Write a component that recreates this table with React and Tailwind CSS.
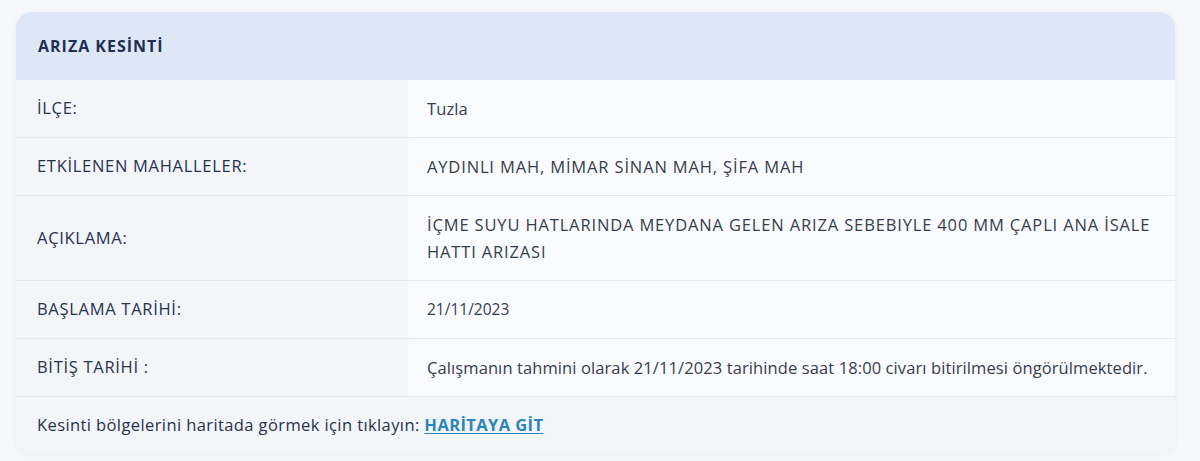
import React from 'react';

const rows = [
  { label: 'İLÇE:', value: 'Tuzla', caps: false },
  { label: 'ETKİLENEN MAHALLELER:', value: 'AYDINLI MAH, MİMAR SİNAN MAH, ŞİFA MAH', caps: true },
  { label: 'AÇIKLAMA:', value: 'İÇME SUYU HATLARINDA MEYDANA GELEN ARIZA SEBEBIYLE 400 MM ÇAPLI ANA İSALE HATTI ARIZASI', caps: true },
  { label: 'BAŞLAMA TARİHİ:', value: '21/11/2023', date: true },
  { label: 'BİTİŞ TARİHİ :', value: 'Çalışmanın tahmini olarak 21/11/2023 tarihinde saat 18:00 civarı bitirilmesi öngörülmektedir.', caps: false },
];

export default function App() {
  return (
    <div className="min-h-screen bg-[#f6f8fc] px-4 pt-3 pb-[6px] font-['Open_Sans',sans-serif]" style={{ width: 1200, height: 461 }}>
      <div className="w-[1159px] rounded-2xl overflow-hidden bg-[#f2f5fa] shadow-[0_1px_6px_rgba(30,45,80,0.06)]">
        {/* Header */}
        <div className="h-[68px] flex items-center px-[22px] bg-[#dee7f6]">
          <h2 className="text-[16px] font-bold tracking-[1px] text-[#1f2f52]">ARIZA KESİNTİ</h2>
        </div>

        {/* Rows */}
        {rows.map((r, i) => (
          <div key={i} className="flex border-b border-[#e3e8f0]">
            <div className="w-[392px] shrink-0 px-[21px] flex items-center bg-[#f2f5fa] text-[16.5px] tracking-[0.7px] text-[#28324a]">
              {r.label}
            </div>
            <div
              className={
                r.caps
                  ? 'flex-1 py-[15px] pl-[19px] pr-6 bg-[#fafbfe] text-[16.5px] leading-[27px] tracking-[0.85px] text-[#363d4c]'
                  : r.date
                  ? 'flex-1 py-[15px] pl-[19px] pr-6 bg-[#fafbfe] text-[15.5px] leading-[27px] text-[#363d4c]'
                  : 'flex-1 py-[15px] pl-[19px] pr-6 bg-[#fafbfe] text-[16.5px] leading-[27px] tracking-[0.1px] text-[#363d4c]'
              }
            >
              {r.value}
            </div>
          </div>
        ))}

        {/* Footer */}
        <div className="h-[57px] flex items-center px-[21px] bg-[#f2f5fa] text-[16.5px] tracking-[0.4px] text-[#28324a]">
          Kesinti bölgelerini haritada görmek için tıklayın:&nbsp;
          <a href="#" className="font-bold text-[#2b86b8] underline underline-offset-2">HARİTAYA GİT</a>
        </div>
      </div>
    </div>
  );
}
